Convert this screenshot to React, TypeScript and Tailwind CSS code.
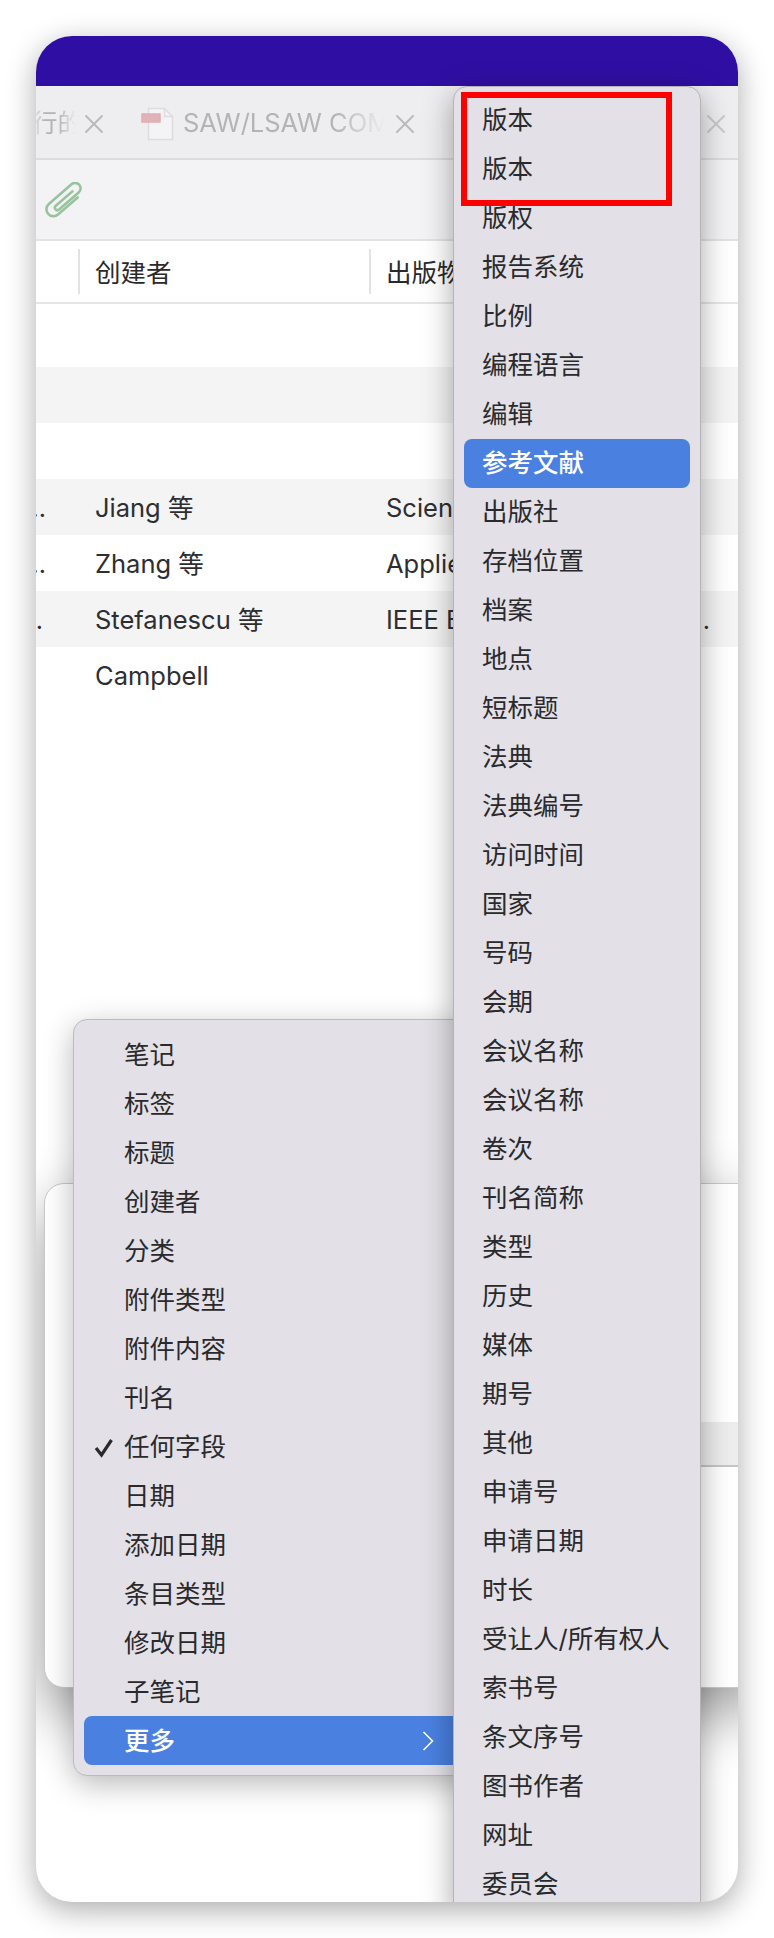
import React from 'react';
import { X } from 'lucide-react';

const moreFields = [
  '版本', '版本', '版权', '报告系统', '比例', '编程语言', '编辑', '参考文献', '出版社', '存档位置',
  '档案', '地点', '短标题', '法典', '法典编号', '访问时间', '国家', '号码', '会期', '会议名称',
  '会议名称', '卷次', '刊名简称', '类型', '历史', '媒体', '期号', '其他', '申请号', '申请日期',
  '时长', '受让人/所有权人', '索书号', '条文序号', '图书作者', '网址', '委员会',
];

const searchFields = [
  '笔记', '标签', '标题', '创建者', '分类', '附件类型', '附件内容', '刊名', '任何字段', '日期',
  '添加日期', '条目类型', '修改日期', '子笔记', '更多',
];

const rows = [
  { dots: '', creator: '', source: '' },
  { dots: '', creator: '', source: '' },
  { dots: '', creator: '', source: '' },
  { dots: 'pr-[34px]', creator: 'Jiang 等', source: 'Science of the Total' },
  { dots: 'pr-[34px]', creator: 'Zhang 等', source: 'Applied Sciences' },
  { dots: 'pr-[37px]', creator: 'Stefanescu 等', source: 'IEEE Electron Device', more: true },
  { dots: '', creator: 'Campbell', source: '' },
];

const PdfIcon = () => (
  <svg width="34" height="34" viewBox="0 0 34 34" className="shrink-0">
    <path d="M7.5 1.5h16l8 8v23h-24z" fill="#f4f4f6" stroke="#dcdcdf" strokeWidth="1.5" />
    <path d="M23.5 1.5v8h8" fill="none" stroke="#dcdcdf" strokeWidth="1.5" />
    <rect x="1" y="7" width="18" height="8" fill="#dcb4ba" stroke="#e7a9b0" strokeWidth="1.5" />
  </svg>
);

const PaperclipIcon = () => (
  <svg width="42" height="36" viewBox="0 0 42 36" className="shrink-0">
    <g transform="rotate(-41 21 18)" fill="none" stroke="#97c49c" strokeWidth="2.6" strokeLinecap="round">
      <path d="M33 25H7a7 7 0 0 1 0-14h30a5.5 5.5 0 0 1 0 11H11a2.5 2.5 0 0 1 0-5h22" />
    </g>
  </svg>
);

const MenuRow = ({ label, active, checked, arrow }: { label: string; active?: boolean; checked?: boolean; arrow?: boolean }) => (
  <div className={`relative flex h-[49px] shrink-0 items-center rounded-[8px] ${active ? 'bg-[#4a80e0] font-medium text-white' : 'text-[#2a2a2c]'}`}>
    {checked && (
      <svg width="20" height="21" viewBox="0 0 20 21" className="absolute left-[10px] top-[15px]">
        <path d="M2 11l5.5 7L17.5 3" fill="none" stroke="#2a2a2c" strokeWidth="3.2" />
      </svg>
    )}
    <span className="whitespace-nowrap">{label}</span>
    {arrow && (
      <svg width="12" height="20" viewBox="0 0 12 20" className="absolute right-[28px] top-[15px]">
        <path d="M1.5 1l9 9-9 9" fill="none" stroke="#fff" strokeWidth="1.6" />
      </svg>
    )}
  </div>
);

export default function App() {
  return (
    <div className="h-[1938px] w-[774px] overflow-hidden bg-white px-[36px] pt-[36px] font-['Inter','Noto_Sans_CJK_SC',sans-serif] text-[25.5px]">
      <div className="relative h-[1866px] w-[702px] overflow-hidden rounded-[36px] bg-white shadow-[0_8px_30px_rgba(0,0,0,0.33)]">
        <div className="h-[50px] bg-[#2f0fa3]" />

        {/* tab strip */}
        <div className="flex h-[74px] items-center border-b-2 border-[#dcdcde] bg-[#eeeef0] pt-[3px] text-[#b4b4b6]">
          <span className="-ml-[4px] w-[44px] shrink-0 whitespace-nowrap [mask-image:linear-gradient(90deg,transparent,black_30%,black_60%,transparent)]">行的</span>
          <X className="ml-[2px] shrink-0 text-[#b9b9bb]" size={32} strokeWidth={1.4} />
          <div className="ml-[31px] flex shrink-0 items-center gap-[8px]">
            <PdfIcon />
            <span className="w-[202px] overflow-hidden whitespace-nowrap [mask-image:linear-gradient(90deg,black_75%,transparent)]">SAW/LSAW COMPOSITE</span>
          </div>
          <X className="ml-[4px] shrink-0 text-[#b9b9bb]" size={32} strokeWidth={1.4} />
          <X className="ml-auto mr-[6px] shrink-0 text-[#c9c9cb]" size={32} strokeWidth={1.4} />
        </div>

        {/* toolbar */}
        <div className="flex h-[81px] items-center border-b-2 border-[#e3e3e5] bg-[#f3f3f5] pl-[7px] pt-[1px]">
          <PaperclipIcon />
        </div>

        {/* table header */}
        <div className="flex h-[63px] items-center border-b-2 border-[#e6e6e6] text-[#2a2a2c]">
          <div className="h-[45px] w-[44px] shrink-0 border-r-2 border-[#e2e2e2]" />
          <div className="flex h-[45px] w-[291px] shrink-0 items-center border-r-2 border-[#e2e2e2] pl-[15px] pt-[3px]">创建者</div>
          <div className="pl-[15px] pt-[3px] whitespace-nowrap">出版物</div>
        </div>

        {/* table rows */}
        <div className="pt-[7px] text-[#2e2e30]">
          {rows.map((row, i) => (
            <div key={i} className={`flex h-[56px] items-center pt-[3px] ${i % 2 === 1 ? 'bg-[#f4f4f5]' : 'bg-white'}`}>
              <div className={`flex w-[44px] shrink-0 justify-end overflow-hidden ${row.dots}`}>{row.dots && '…'}</div>
              <div className="w-[291px] shrink-0 pl-[15px] whitespace-nowrap">{row.creator}</div>
              <div className="min-w-0 flex-1 overflow-hidden pl-[15px] whitespace-nowrap">{row.source}</div>
              {row.more && <div className="mr-[28px] shrink-0">…</div>}
            </div>
          ))}
        </div>

        {/* search dialog behind the menus */}
        <div className="absolute left-[8px] top-[1147px] h-[505px] w-[720px] overflow-hidden rounded-l-[20px] border border-[#c8c8c8] bg-white shadow-[0_24px_60px_rgba(0,0,0,0.4)]">
          <div className="ml-[200px] mt-[238px] h-[45px] border-b-2 border-[#c6c6c6] bg-[#ededed]" />
        </div>

        {/* search field menu */}
        <div className="absolute left-[37px] top-[983px] flex h-[757px] w-[400px] flex-col rounded-[14px] border border-[#bcbabf] bg-[#e3e1e7] py-[10px] pl-[10px] pr-[10px] shadow-[0_8px_30px_rgba(0,0,0,0.28)]">
          {searchFields.map((label) => (
            <div key={label} className="[&>div]:pl-[40px] [&>div>span]:pt-[2px]">
              <MenuRow label={label} active={label === '更多'} checked={label === '任何字段'} arrow={label === '更多'} />
            </div>
          ))}
        </div>

        {/* submenu, runs off the bottom of the window */}
        <div className="absolute left-[417px] top-[50px] flex h-[1830px] w-[248px] flex-col rounded-[14px] border border-[#b5b3b8] bg-[#e3e1e7] pl-[10px] pr-[10px] pt-[9px] shadow-[0_8px_30px_rgba(0,0,0,0.35)]">
          {moreFields.map((label, i) => (
            <div key={i} className="[&>div]:pl-[18px]">
              <MenuRow label={label} active={label === '参考文献'} />
            </div>
          ))}
        </div>

        {/* red annotation box */}
        <div className="absolute left-[425px] top-[56px] h-[114px] w-[211px] border-[6px] border-[#ff0000]" />
      </div>
    </div>
  );
}
